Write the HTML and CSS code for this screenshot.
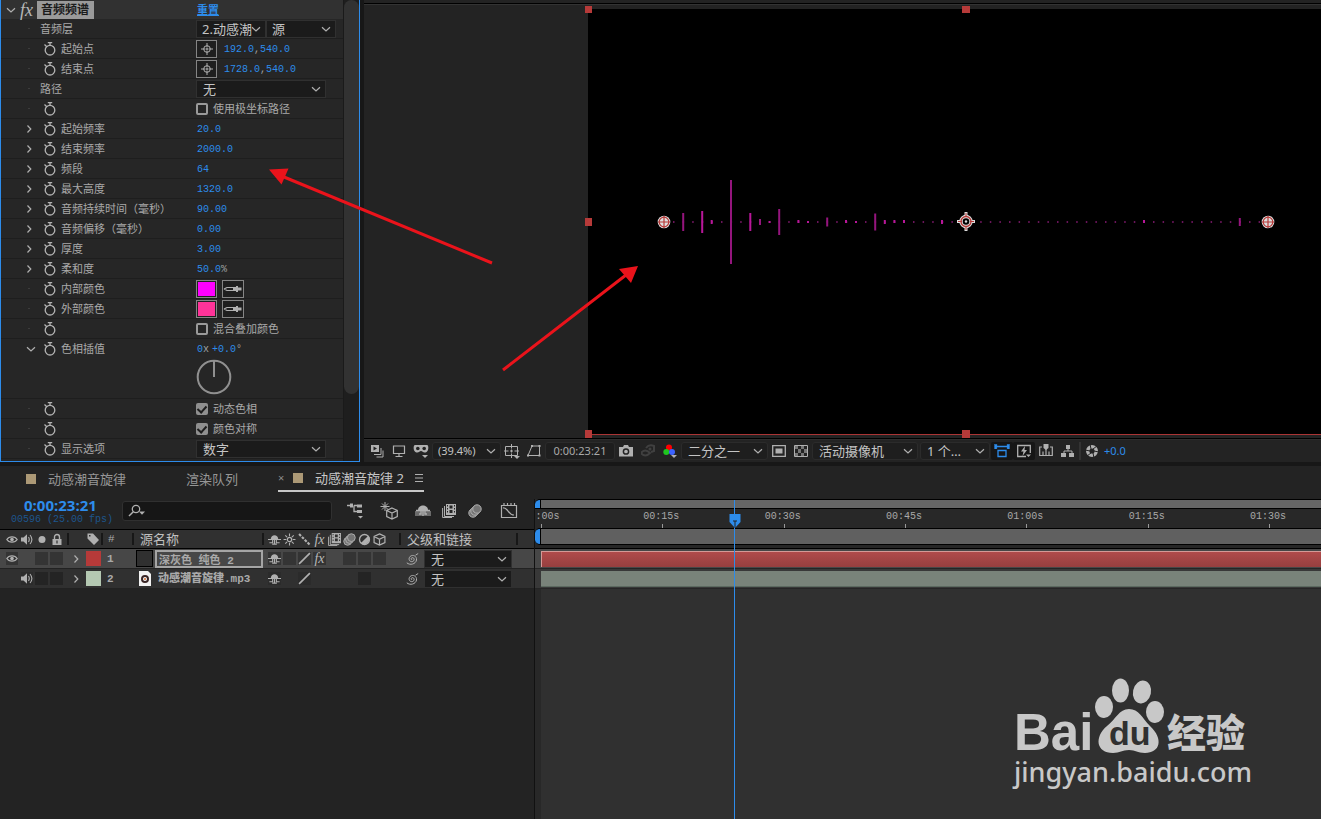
FILE: index.html
```html
<!DOCTYPE html>
<html lang="zh-CN">
<head>
<meta charset="utf-8">
<title>音频频谱</title>
<link rel="stylesheet" href="styles.css">
</head>
<body>
<svg class="defs" aria-hidden="true">
  <symbol id="watch" viewBox="0 0 14 14"><circle cx="7" cy="8.2" r="4.8" fill="none" stroke="currentColor" stroke-width="1.3"/><path d="M4.800 .7h4.400M7 .7v2.500M1.500 2.500l2 2" fill="none" stroke="currentColor" stroke-width="1.300"/></symbol>
  <symbol id="right" viewBox="0 0 10 10"><path d="M3.500 1.500L6.800 5 3.500 8.500" fill="none" stroke="currentColor" stroke-width="1.200"/></symbol>
  <symbol id="down" viewBox="0 0 10 10"><path d="M1 3.200L5 7l4-3.800" fill="none" stroke="currentColor" stroke-width="1.200"/></symbol>
  <symbol id="target" viewBox="0 0 12 12"><circle cx="6" cy="6" r="3.300" fill="none" stroke="currentColor"/><path d="M6 0v4.500M6 7.500V12M0 6h4.500M7.500 6H12" stroke="currentColor"/><circle cx="6" cy="6" r="1" fill="currentColor"/></symbol>
  <symbol id="dropper" viewBox="0 0 20 8"><path d="M1 4L4 2.500H11M1 4L4 5.500H11" fill="none" stroke="currentColor" stroke-width="1.200"/><path d="M10 2h3V1h2v1.500h3.500v3H15V7h-2V6h-3z" fill="currentColor"/></symbol>
  <symbol id="eye" viewBox="0 0 12 12"><path d="M.8 6C3 2.400 9 2.400 11.200 6 9 9.600 3 9.600.8 6z" fill="none" stroke="currentColor" stroke-width="1.200"/><circle cx="6" cy="6" r="1.800" fill="currentColor"/></symbol>
  <symbol id="speaker" viewBox="0 0 12 12"><path d="M0 4h2.500L6 .8v10.400L2.500 8H0z" fill="currentColor"/><path d="M7.500 3.500q1.500 2.500 0 5M9 1.500q3.800 4.500 0 9" fill="none" stroke="currentColor" stroke-width="1.100"/></symbol>
  <symbol id="dot" viewBox="0 0 12 12"><circle cx="6" cy="6" r="3.500" fill="currentColor"/></symbol>
  <symbol id="lock" viewBox="0 0 12 12"><path d="M3.500 6V3.500a2.500 2.500 0 0 1 5 0V6" fill="none" stroke="currentColor" stroke-width="1.400"/><path d="M1.500 5.500h9v6h-9zM5.400 7v3h1.200V7z" fill="currentColor" fill-rule="evenodd"/></symbol>
  <symbol id="tag" viewBox="0 0 14 14"><path d="M1.500 1.500H7L13 8l-5 5L1.500 6.500zM3 3v1.500h1.500V3z" fill="currentColor" fill-rule="evenodd"/></symbol>
  <symbol id="shy" viewBox="0 0 14 12"><path d="M3 5.500C3 0 11 0 11 5.500z" fill="currentColor"/><path d="M0 6h14M7 5v6M1.500 9.500H5V6M12.500 9.500H9V6M4.500 11h5" fill="none" stroke="currentColor" stroke-width="1.200"/></symbol>
  <symbol id="sun" viewBox="0 0 12 12"><circle cx="6" cy="6" r="2" fill="none" stroke="currentColor" stroke-width="1.200"/><path d="M6 .5v2.500M6 9v2.500M.5 6H3M9 6h2.500M2.100 2.100l1.700 1.700M8.200 8.200l1.700 1.700M2.100 9.900l1.700-1.700M8.200 3.800l1.700-1.700" stroke="currentColor"/></symbol>
  <symbol id="quality" viewBox="0 0 12 12"><path d="M1 1l10 10" stroke="currentColor" stroke-width="2" stroke-dasharray="2.500 1.200"/></symbol>
  <symbol id="slash" viewBox="0 0 12 12"><path d="M1 11L11 1" stroke="currentColor" stroke-width="1.500"/></symbol>
  <symbol id="film" viewBox="0 0 14 14"><path d="M4 0h10v11H4zM5 1v1.500h1V1zm0 3v1.500h1V4zm0 3v1.500h1V7zm7-6v1.500h1V1zm0 3v1.500h1V4zm0 3v1.500h1V7zM7.500 1.500v3h3v-3zm0 4.500v3h3V6z" fill="currentColor" fill-rule="evenodd"/><path d="M2.500 2v10.500H12M.6 4v9.500H10" fill="none" stroke="currentColor"/></symbol>
  <symbol id="blur" viewBox="0 0 14 14"><g fill="#747474" stroke="currentColor"><circle cx="5" cy="9" r="4.200"/><circle cx="7" cy="7" r="4.200"/><circle cx="9" cy="5" r="4.200"/></g></symbol>
  <symbol id="adjust" viewBox="0 0 12 12"><circle cx="6" cy="6" r="4.600" fill="none" stroke="currentColor" stroke-width="1.200"/><path d="M9.500 2.500a5 5 0 0 1-7 7z" fill="currentColor"/></symbol>
  <symbol id="cube" viewBox="0 0 12 12"><path d="M6 .8l5 2.400v5.600l-5 2.400-5-2.400V3.200zM1 3.200l5 2.600 5-2.600M6 5.800V11" fill="none" stroke="currentColor" stroke-width="1.100"/></symbol>
  <symbol id="whip" viewBox="0 0 14 14"><path d="M7.200 7.600c-1.200.4-1.600-1.400-.2-1.900 2.300-.6 3.100 2.800.8 3.800-3.200 1-5-2.700-2.600-5.100 2.700-2.300 6.800-.2 6.300 3.600-.8 4.200-6.500 5.600-9.700 2.800M10.500 3.200L13.200 1.500" fill="none" stroke="currentColor"/></symbol>
  <symbol id="monitor" viewBox="0 0 14 14"><path d="M1.500 2h11v7.500h-11zM7 9.500V12M3.500 12.500h7" fill="none" stroke="currentColor" stroke-width="1.200"/></symbol>
</svg>

<div class="app">
  <section class="effects">
    <div class="props">
      <header class="fx-head">
        <svg class="i10"><use href="#down"/></svg><i class="fx">fx</i>
        <strong>音频频谱</strong><a href="#reset">重置</a>
      </header>
      <div class="row"><span class="tiny"></span><label class="wide" for="s1">音频层</label><div class="value"><span class="pick short"><select id="s1"><option>2.动感潮</option></select><svg><use href="#down"/></svg></span><span class="pick short"><select aria-label="源"><option>源</option></select><svg><use href="#down"/></svg></span></div></div>
      <div class="row"><span class="tiny"></span><button class="watch" aria-label="关键帧"><svg><use href="#watch"/></svg></button><span>起始点</span><div class="value"><button class="box" aria-label="选择点"><svg class="i12"><use href="#target"/></svg></button><span class="num point">192.0<em>,</em>540.0</span></div></div>
      <div class="row"><span class="tiny"></span><button class="watch" aria-label="关键帧"><svg><use href="#watch"/></svg></button><span>结束点</span><div class="value"><button class="box" aria-label="选择点"><svg class="i12"><use href="#target"/></svg></button><span class="num point">1728.0<em>,</em>540.0</span></div></div>
      <div class="row"><span class="tiny"></span><label class="wide" for="s2">路径</label><div class="value"><span class="pick long"><select id="s2"><option>无</option></select><svg><use href="#down"/></svg></span></div></div>
      <div class="row"><span class="tiny"></span><button class="watch" aria-label="关键帧"><svg><use href="#watch"/></svg></button><span></span><label class="value"><input type="checkbox">使用极坐标路径</label></div>
      <div class="row"><svg class="i10 ch"><use href="#right"/></svg><button class="watch" aria-label="关键帧"><svg><use href="#watch"/></svg></button><span>起始频率</span><div class="value num">20.0</div></div>
      <div class="row"><svg class="i10 ch"><use href="#right"/></svg><button class="watch" aria-label="关键帧"><svg><use href="#watch"/></svg></button><span>结束频率</span><div class="value num">2000.0</div></div>
      <div class="row"><svg class="i10 ch"><use href="#right"/></svg><button class="watch" aria-label="关键帧"><svg><use href="#watch"/></svg></button><span>频段</span><div class="value num">64</div></div>
      <div class="row"><svg class="i10 ch"><use href="#right"/></svg><button class="watch" aria-label="关键帧"><svg><use href="#watch"/></svg></button><span>最大高度</span><div class="value num">1320.0</div></div>
      <div class="row"><svg class="i10 ch"><use href="#right"/></svg><button class="watch" aria-label="关键帧"><svg><use href="#watch"/></svg></button><span>音频持续时间（毫秒）</span><div class="value num">90.00</div></div>
      <div class="row"><svg class="i10 ch"><use href="#right"/></svg><button class="watch" aria-label="关键帧"><svg><use href="#watch"/></svg></button><span>音频偏移（毫秒）</span><div class="value num">0.00</div></div>
      <div class="row"><svg class="i10 ch"><use href="#right"/></svg><button class="watch" aria-label="关键帧"><svg><use href="#watch"/></svg></button><span>厚度</span><div class="value num">3.00</div></div>
      <div class="row"><svg class="i10 ch"><use href="#right"/></svg><button class="watch" aria-label="关键帧"><svg><use href="#watch"/></svg></button><span>柔和度</span><div class="value num">50.0<em>%</em></div></div>
      <div class="row"><span class="tiny"></span><button class="watch" aria-label="关键帧"><svg><use href="#watch"/></svg></button><span>内部颜色</span><div class="value"><button class="box inner" aria-label="内部颜色"></button><button class="box drop" aria-label="吸管"><svg><use href="#dropper"/></svg></button></div></div>
      <div class="row"><span class="tiny"></span><button class="watch" aria-label="关键帧"><svg><use href="#watch"/></svg></button><span>外部颜色</span><div class="value"><button class="box outer" aria-label="外部颜色"></button><button class="box drop" aria-label="吸管"><svg><use href="#dropper"/></svg></button></div></div>
      <div class="row"><span class="tiny"></span><button class="watch" aria-label="关键帧"><svg><use href="#watch"/></svg></button><span></span><label class="value"><input type="checkbox">混合叠加颜色</label></div>
      <div class="row open"><svg class="i10 ch"><use href="#down"/></svg><button class="watch" aria-label="关键帧"><svg><use href="#watch"/></svg></button><span>色相插值</span><div class="value num">0<em>x</em><span class="deg">+0.0</span><em>°</em></div></div>
      <div class="row dial"><svg viewBox="0 0 36 36"><circle cx="18" cy="18" r="16.300"/><path d="M18 2v16"/></svg></div>
      <div class="row"><span class="tiny"></span><button class="watch" aria-label="关键帧"><svg><use href="#watch"/></svg></button><span></span><label class="value"><input type="checkbox" checked>动态色相</label></div>
      <div class="row"><span class="tiny"></span><button class="watch" aria-label="关键帧"><svg><use href="#watch"/></svg></button><span></span><label class="value"><input type="checkbox" checked>颜色对称</label></div>
      <div class="row"><span class="tiny"></span><button class="watch" aria-label="关键帧"><svg><use href="#watch"/></svg></button><label for="s3">显示选项</label><div class="value"><span class="pick long"><select id="s3"><option>数字</option></select><svg><use href="#down"/></svg></span></div></div>
    </div>
    <div class="track"><div class="thumb"></div></div>
  </section>

  <section class="comp">
    <div class="viewer">
      <div class="canvas">
        <svg class="scene"><g transform="translate(-588 -9)">
          <path d="M673 222H1260" stroke="#8c1c78" stroke-width="1.500" stroke-dasharray="1.500 8.100"/>
          <path d="M711.700 220v4M769.500 221v2M798.400 220v3M808 221v2M846 220v3M856 221v2M884.800 220v4M894.400 220v3M904 220v3M942 220v4M1144 220v3M702.200 211v22M750.300 213v18" stroke="#b81799" stroke-width="2"/>
          <path d="M683.200 213v18M731 180v84M760 219v6M779.200 209v26M827.200 217.500v9M875.200 213.500v17M1239.800 218v8" stroke="#94157d" stroke-width="2"/>
          <path d="M592 434.500H1400" stroke="#a93434"/>
          <g fill="#b63a39"><path d="M585 6h7v7h-7zM962 6h8v7h-8zM585 218h7v8h-7zM585 430h7v8h-7zM962 430h8v8h-8z"/></g>
          <g id="pin"><circle cx="664" cy="222" r="6.300" fill="#ddd"/><circle cx="664" cy="222" r="4.800" fill="none" stroke="#b63a39" stroke-width="1.200"/><path d="M664 216v12M658 222h12" stroke="#b63a39" stroke-width="1.200"/></g>
          <use href="#pin" x="604"/>
          <g fill="none"><circle cx="966" cy="221.500" r="5" stroke="#ddd" stroke-width="3.400"/><path d="M966 212v5M966 226v5M957 221.500h5M970 221.500h5" stroke="#ddd" stroke-width="3"/><circle cx="966" cy="221.500" r="5" stroke="#b63a39" stroke-width="1.300"/><path d="M966 213v4M966 226v4M958 221.500h4M970 221.500h4" stroke="#b63a39"/><circle cx="966" cy="221.500" r="1.200" fill="#ddd"/></g>
        </g></svg>
      </div>
    </div>
    <div class="bar">
      <span class="cell"><svg class="i14"><path d="M1 1h8v7H1z" fill="currentColor"/><path d="M3.500 2.500L7 4.500 3.500 6.500z" fill="#222"/><path d="M11 4v6.500H4M13 6.500V13H6.500" fill="none" stroke="currentColor"/></svg></span>
      <span class="cell"><svg class="i14"><use href="#monitor"/></svg></span>
      <span class="cell"><svg class="i16"><path d="M2 2h12c2 0 2 7-1.500 7.500C10 10 9.500 8 8 8s-2 2-4.500 1.500C0 9 0 2 2 2z" fill="currentColor"/><g fill="#232323"><circle cx="4.800" cy="5.500" r="1.800"/><circle cx="11.200" cy="5.500" r="1.800"/></g><path d="M9 12h6l-3 3z" fill="currentColor"/></svg></span>
      <span class="pick zoom"><select aria-label="缩放"><option>(39.4%)</option></select><svg><use href="#down"/></svg></span>
      <span class="cell"><svg class="i16"><path d="M1.500 3.500h12v9h-12zM7.500 1v4.500M7.500 10.500V15M0 8h4.500M10.500 8H15M6 8h3M7.500 6.500v3" fill="none" stroke="currentColor"/><path d="M10 13h6l-3 3z" fill="currentColor"/></svg></span>
      <span class="cell"><svg class="i14"><path d="M5 2h7.500v9.500H1L5 2z" fill="none" stroke="currentColor"/><path d="M4 1h2v2H4zM11.500 1h2v2h-2zM11.500 10.500h2v2h-2zM0 10.500h2v2H0z" fill="currentColor"/></svg></span>
      <span class="timecode">0:00:23:21</span>
      <span class="cell"><svg class="i14"><path d="M0 3h4l1-2h4l1 2h4v9.500H0z" fill="currentColor"/><circle cx="7" cy="7.500" r="2.600" fill="currentColor" stroke="#222" stroke-width="1.500"/></svg></span>
      <span class="cell dim"><svg class="i14"><path d="M0 9q4-5 9 0-5 5-9 0z" fill="none" stroke="currentColor" stroke-width="2"/><path d="M5 4q3-4 8-2v5l-3 1" fill="none" stroke="currentColor" stroke-width="2"/><circle cx="9" cy="5" r="1.500" fill="currentColor"/></svg></span>
      <span class="cell"><svg class="i16"><circle cx="7" cy="4.500" r="3" fill="#f00"/><circle cx="4.300" cy="9" r="3" fill="#1fc51f"/><circle cx="10" cy="9" r="3" fill="#3c62ff"/><path d="M9 12h6l-3 3z" fill="currentColor"/></svg></span>
      <span class="pick res"><select aria-label="分辨率"><option>二分之一</option></select><svg><use href="#down"/></svg></span>
      <span class="cell"><svg class="i14"><path d="M.7 1.700h12.600v10.600H.7z" fill="none" stroke="currentColor" stroke-width="1.300"/><path d="M3.500 4.500h7v5h-7z" fill="currentColor"/></svg></span>
      <span class="cell"><svg class="i14"><path d="M.5 1.500h13v11H.5z" fill="none" stroke="currentColor"/><path d="M1 2h3v3H1zM7 2h3v3H7zM4 5h3v4H4zM10 5h3v4h-3zM1 9h3v3H1zM7 9h3v3H7z" fill="#777"/></svg></span>
      <span class="pick cam"><select aria-label="视图"><option>活动摄像机</option></select><svg><use href="#down"/></svg></span>
      <span class="pick views"><select aria-label="视图数"><option>1 个…</option></select><svg><use href="#down"/></svg></span>
      <span class="cell on blue"><svg class="i16"><path d="M1 1v5M15 1v5M1 3.500h14M4 7.500h8v6H4zM3 1.500L1 3.500l2 2M13 1.500l2 2-2 2" fill="none" stroke="currentColor" stroke-width="1.300"/></svg></span>
      <span class="cell on"><svg class="i14"><path d="M9 12.500H.7V1.500h12.600V9" fill="none" stroke="currentColor" stroke-width="1.300"/><path d="M8 2L4 7.500h2.500L5.500 12l4.500-6H7.500zM9 10.500h5L11.500 13z" fill="currentColor"/></svg></span>
      <span class="cell"><svg class="i14"><path d="M3 3H.7v8.500h12.600V3H11M4 11V7.500M7 11V5M10 11V7.500" fill="none" stroke="currentColor" stroke-width="1.200"/><path d="M4.500 0h5v4L7 6 4.500 4z" fill="currentColor"/></svg></span>
      <span class="cell"><svg class="i14"><path d="M5 1h4v4H5zM0 9h5v4H0zM8 9h5v4H8z" fill="currentColor"/><path d="M7 4v3M3 10V7h8v3" fill="none" stroke="currentColor"/></svg></span>
      <span class="rule"></span>
      <span class="cell"><svg class="i14"><circle cx="7" cy="7" r="4.300" fill="none" stroke="currentColor" stroke-width="3.400"/><path d="M5 0l1 5M12 2L8 5M14 8l-5-1M9 14L8 9M2 12l4-3M0 6l5 1" stroke="#232323"/></svg></span>
      <span class="exposure">+0.0</span>
    </div>
  </section>

  <section class="timeline">
    <nav class="tabs">
      <button class="tab first"><i class="chip"></i>动感潮音旋律</button>
      <button class="tab">渲染队列</button>
      <button class="tab active"><small>×</small><i class="chip"></i>动感潮音旋律 2<svg class="i10"><path d="M1 1.500h8M1 5h8M1 8.500h8" stroke="currentColor"/></svg></button>
    </nav>
    <div class="layers">
      <div class="tools">
        <div class="time"><b>0:00:23:21</b><span>00596 (25.00 fps)</span></div>
        <label class="search"><svg viewBox="0 0 20 14"><circle cx="8" cy="5" r="3.700" fill="none" stroke="currentColor" stroke-width="1.300"/><path d="M5.300 7.700L1 12" stroke="currentColor" stroke-width="1.500"/><path d="M11 7.500h6l-3 3.200z" fill="currentColor"/></svg><input type="text" aria-label="搜索"></label>
        <div class="modes">
          <svg class="i18"><path d="M1 3.500h6M8 3.500h3M8 3.500v6h3" fill="none" stroke="currentColor" stroke-width="1.300"/><path d="M4 1.500h3v4H4zM11 2.500h5v3h-5zM11 8h5v3h-5zM12 14h5l-2.500 2.500z" fill="currentColor"/></svg>
          <svg class="i18" viewBox="0 0 18 18"><path d="M12 6l5.300 2.500v6L12 17l-5.300-2.500v-6zM6.700 8.500L12 11l5.300-2.500M12 11v6" fill="none" stroke="currentColor" stroke-width="1.200"/><path d="M5 0v9M.5 4.500h9M2 1.500l6 6M8 1.500l-6 6" stroke="currentColor"/></svg>
          <svg class="i18" viewBox="0 0 18 18"><path d="M1 9h16v5H1z" fill="#6b6b6b"/><path d="M4 8c0-6 10-6 10 0z" fill="currentColor"/><path d="M2 8.500h14M9 7v7M5 12h2V9M13 12h-2V9" fill="none" stroke="currentColor" stroke-width="1.300"/></svg>
          <svg class="i14"><use href="#film"/></svg>
          <svg class="i14"><use href="#blur"/></svg>
          <svg class="i18" viewBox="0 0 18 18"><path d="M1.500 3.500h15v12h-15zM4 1v3M7.500 1v3M11 1v3M14.500 1v3M3 6c5-1 5 7 11 7" fill="none" stroke="currentColor" stroke-width="1.200"/></svg>
        </div>
      </div>
      <div class="line head">
        <div class="quad"><svg><use href="#eye"/></svg><svg><use href="#speaker"/></svg><svg><use href="#dot"/></svg><svg><use href="#lock"/></svg></div>
        <span class="edge"></span><svg class="i14"><use href="#tag"/></svg><span class="no hash">#</span><span class="title edge">源名称</span>
        <div class="octo"><svg><use href="#shy"/></svg><svg><use href="#sun"/></svg><svg><use href="#quality"/></svg><i class="fx">fx</i><svg><use href="#film"/></svg><svg><use href="#blur"/></svg><svg><use href="#adjust"/></svg><svg><use href="#cube"/></svg></div>
        <span class="edge late"></span><span class="parent title edge">父级和链接</span>
      </div>
      <div class="line chosen">
        <div class="quad"><svg class="well"><use href="#eye"/></svg><span></span><i class="well"></i><i class="well"></i></div>
        <svg class="i10 mid"><use href="#right"/></svg><i class="label red"></i><b class="no">1</b>
        <div class="name"><i class="solid"></i><input type="text" value="深灰色 纯色 2" aria-label="图层名称"></div>
        <div class="octo"><svg class="well"><use href="#shy"/></svg><i class="well"></i><svg class="well"><use href="#slash"/></svg><i class="fx well">fx</i><span></span><i class="well"></i><i class="well"></i><i class="well"></i></div>
        <span></span><div class="parent"><svg class="i14"><use href="#whip"/></svg><span class="pick"><select aria-label="父级"><option>无</option></select><svg><use href="#down"/></svg></span></div>
      </div>
      <div class="line">
        <div class="quad"><span></span><svg class="well"><use href="#speaker"/></svg><i class="well"></i><i class="well"></i></div>
        <svg class="i10 mid"><use href="#right"/></svg><i class="label green"></i><b class="no">2</b>
        <div class="name"><svg class="file" viewBox="0 0 12 15"><path d="M0 0h9l3 3v12H0z" fill="#f2f2f2"/><circle cx="6" cy="8" r="3" fill="#fff" stroke="#3a2626" stroke-width="2"/><circle cx="6" cy="8" r="1" fill="#d06a2c"/></svg><b>动感潮音旋律.mp3</b></div>
        <div class="octo"><svg class="well"><use href="#shy"/></svg><span></span><svg class="well"><use href="#slash"/></svg><span></span><span></span><span></span><i class="well"></i><span></span></div>
        <span></span><div class="parent"><svg class="i14"><use href="#whip"/></svg><span class="pick"><select aria-label="父级"><option>无</option></select><svg><use href="#down"/></svg></span></div>
      </div>
    </div>
    <div class="graph">
      <div class="navigator"></div>
      <div class="ruler"><span class="start">:00s</span><span>00:15s</span><span>00:30s</span><span>00:45s</span><span>01:00s</span><span>01:15s</span><span>01:30s</span></div>
      <div class="work"></div>
      <div class="cache"></div>
      <div class="lane chosen"><div class="clip red"></div></div>
      <div class="lane"><div class="clip green"></div></div>
      <div class="empty"></div>
      <svg class="playhead" viewBox="0 0 12 14"><path d="M.5 0h11v8L6 14 .5 8z" fill="#2d8ceb"/><path d="M4 7h4M6 7v7" stroke="#222"/></svg>
    </div>
  </section>

  <svg class="arrows" aria-hidden="true">
    <path d="M492 263L284 177M503 370L626 275" stroke="#ea131b" stroke-width="3"/>
    <path d="M269 169.500l19.500-1-7 16zM638 266l-7 17-12-14z" fill="#ea131b"/>
  </svg>
  <svg class="mark" viewBox="0 0 250 120">
    <g fill="#c8c8c8">
      <text class="bai" x="2" y="80">Bai</text>
      <ellipse cx="92" cy="37" rx="9" ry="11"/><ellipse cx="108.500" cy="20.500" rx="8.500" ry="12"/><ellipse cx="130" cy="22" rx="9" ry="11.500" transform="rotate(12 130 22)"/><ellipse cx="143" cy="42" rx="9" ry="11"/>
      <path d="M117 39c10 0 13 9 21 17 14 13 10 27-5 27-8 0-9-3-16-3s-9 3-16 3c-17 0-19-16-6-27 9-7 12-17 22-17z"/>
      <text class="jy" x="155" y="77">经验</text>
      <text class="site" x="2" y="112">jingyan.baidu.com</text>
    </g>
    <text class="du" x="97" y="75">du</text>
  </svg>
</div>
</body>
</html>
```

FILE: styles.css
```css
* { box-sizing: border-box; }
body { margin: 0; background: #171717; color: #a9a9a9; font: 11px/18px "Noto Sans", "Noto Sans CJK SC", sans-serif; }
.defs { position: absolute; width: 0; height: 0; }
svg { display: block; flex: none; color: #b0b0b0; }
button, input, select { font: inherit; color: inherit; margin: 0; }
button { background: none; border: 0; padding: 0; }
em { font-style: normal; color: #a0a0a0; }
.i10 { width: 10px; height: 10px; }
.i12 { width: 12px; height: 12px; }
.i14 { width: 14px; height: 14px; }
.i16 { width: 16px; height: 16px; }
.i18 { width: 18px; height: 18px; }
.fx { font: italic 16px/16px "Liberation Serif", serif; color: #b8b8b8; }

.app { position: relative; display: grid; grid-template-columns: 360px minmax(0, 1fr); grid-template-rows: auto 1fr; gap: 4px; min-height: 100vh; overflow: hidden; }

/* effect controls */
.effects { display: flex; border: 1px solid #2d8ceb; border-top: 0; background: #232323; }
.props { flex: 1; background: #262626; padding-bottom: 2px; }
.fx-head { display: flex; align-items: center; height: 19px; background: #313131; padding-left: 5px; }
.fx-head .fx { width: 21px; text-align: center; font-size: 18px; }
.fx-head strong { width: 57px; background: #9a9a9a; color: #1b1b1b; font-size: 12px; padding-left: 4px; }
.fx-head a { color: #2d8ceb; font-weight: 700; margin-left: 103px; }
.row { display: grid; grid-template-columns: 37px 23px 135px 1fr; align-items: center; height: 20px; border-bottom: 1px solid #1e1e1e; }
.row.open { border-color: transparent; }
.row .wide { grid-column: 2 / 4; padding-left: 2px; }
.tiny { width: 2px; height: 1px; background: #3c3c3c; margin-left: 27px; }
.ch { margin-left: 23px; }
.open .ch { margin-left: 25px; }
.watch { width: 23px; display: grid; place-items: center; }
.watch svg { width: 14px; height: 14px; color: #b4b4b4; }
.value { display: flex; align-items: center; }
.num { color: #2d8ceb; font: 10px/17px "Liberation Mono", monospace; padding: 2px 0 0 1px; }
.deg { margin-left: 3px; }
.point { margin-left: 6px; }
.box { width: 21px; height: 18px; border: 1px solid #858585; background: #1f1f1f; display: grid; place-items: center; }
.box.inner { background: #f0f; box-shadow: inset 0 0 0 1px #222; }
.box.outer { background: #ff3399; box-shadow: inset 0 0 0 1px #222; }
.drop { width: 22px; margin-left: 5px; }
.drop svg { width: 20px; height: 8px; }
.value input { appearance: none; width: 12px; height: 12px; border: 2px solid #9a9a9a; border-radius: 2px; margin-right: 5px; }
.value input:checked { border: 0; background: #8f8f8f; display: grid; place-items: center; }
.value input:checked::after { content: ""; width: 4px; height: 7px; border: solid #1e1e1e; border-width: 0 2px 2px 0; transform: rotate(42deg); }
.dial { display: block; height: 40px; padding-left: 195px; }
.dial svg { width: 36px; height: 36px; fill: none; stroke: #909090; stroke-width: 2px; }
.track { width: 16px; border-left: 1px solid #1a1a1a; background: #1e1e1e; }
.thumb { height: 394px; background: #323232; border-radius: 8px; }

.pick { position: relative; display: inline-flex; height: 18px; background: #1b1b1b; border: 1px solid #303030; font-size: 13px; color: #c4c4c4; }
.pick select { appearance: none; width: 100%; border: 0; background: none; padding: 0 13px 0 6px; line-height: 16px; }
.pick svg { position: absolute; right: 4px; top: 3px; width: 10px; height: 10px; pointer-events: none; }
.short { width: 70px; }
.short select { padding-left: 5px; }
.long { width: 130px; }

/* composition viewer */
.comp { display: flex; flex-direction: column; background: #232323; }
.viewer { flex: 1; display: flex; margin-top: 3px; padding: 4px 0 4px 224px; border-top: 1px solid #000; border-bottom: 1px solid #000; box-shadow: inset 0 1px #333; }
.canvas { flex: 1; background: #000; margin-top: 1px; }
.scene { width: 100%; height: 425px; overflow: visible; }
.bar { display: flex; align-items: center; height: 23px; padding-left: 2px; border-top: 1px solid #2c2c2c; }
.cell { width: 22px; height: 18px; flex: none; display: grid; place-items: center; }
.cell.on { background: #161616; border-radius: 2px; }
.dim svg { color: #404040; }
.blue svg { color: #2d8ceb; }
.bar .pick, .timecode { border-radius: 3px; background: #1e1e1e; border-color: #2b2b2b; }
.bar .zoom { width: 69px; font-size: 11px; }
.bar .zoom select { padding-left: 5px; }
.timecode { width: 70px; text-align: center; border: 1px solid #2b2b2b; line-height: 16px; }
.bar .res { width: 87px; }
.bar .cam { width: 106px; margin-right: 2px; }
.bar .views { width: 70px; margin-right: 1px; }
.rule { width: 2px; height: 18px; background: #333; }
.exposure { color: #2d8ceb; padding-left: 1px; }

/* timeline */
.timeline { grid-column: 1 / 3; display: grid; grid-template-columns: 534px minmax(0, 1fr); grid-template-rows: 33px 1fr; background: #232323; }
.tabs { grid-column: 1 / 3; display: flex; align-items: flex-start; padding-left: 26px; font-size: 13px; color: #969696; }
.tab { display: flex; align-items: center; height: 26px; margin-right: 40px; }
.tab.first { margin-right: 60px; }
.chip { width: 10px; height: 10px; background: #ac9976; margin-right: 12px; }
.active { color: #c8c8c8; border-bottom: 2px solid #c8c8c8; }
.active small { width: 15px; text-align: left; color: #8c8c8c; font-size: 11px; }
.active svg { margin-left: 10px; }
.tools { display: grid; grid-template-columns: 122px 210px 1fr; height: 30px; }
.time { display: flex; flex-direction: column; padding-left: 11px; }
.time b { color: #2d8ceb; font: 700 15px/12px "Open Sans", sans-serif; padding-left: 13px; }
.time span { color: #1d558c; font: 10px/18px "Liberation Mono", monospace; }
.search { display: flex; align-items: center; height: 20px; margin-top: 2px; background: #161616; border: 1px solid #303030; border-radius: 3px; padding-left: 5px; }
.search svg { width: 20px; height: 14px; }
.search input { flex: 1; min-width: 0; background: none; border: 0; }
.modes { display: flex; align-items: center; height: 24px; padding-left: 14px; }
.modes svg:nth-child(2) { margin-left: 16px; }
.modes svg:nth-child(3) { margin-left: 16px; }
.modes svg:nth-child(4) { margin-left: 10px; }
.modes svg:nth-child(5) { margin-left: 12px; }
.modes svg:nth-child(6) { margin-left: 18px; }
.line { display: grid; grid-template-columns: 60px 22px 15px 35px 131px 120px 17px 1fr; align-items: center; height: 20px; padding-left: 4px; background: #303030; border-bottom: 1px solid #222; }
.line.head { border-top: 1px solid #000; border-bottom-color: #000; }
.line.chosen, .lane.chosen { background: #474747; }
.quad, .octo { display: grid; grid-template-columns: repeat(4, 15px); place-items: center; }
.octo { grid-template-columns: repeat(8, 15px); }
.quad svg, .octo svg { width: 13px; height: 13px; }
.quad svg { width: 12px; }
.octo .fx { font-size: 14px; line-height: 13px; text-align: center; }
.well { width: 13px; height: 13px; background: #2b2b2b; }
i.well, .chosen .well { background: #343434; }
.line:not(.chosen) i.well { background: #242424; }
.mid { justify-self: center; margin-left: 2px; }
.edge { border-right: 2px solid #171717; height: 12px; width: 5px; line-height: 12px; }
.edge.late { margin-left: 9px; }
.title { font-size: 13px; color: #c0c0c0; }
.title.edge { width: 128px; padding-left: 4px; }
.parent.title.edge { width: 114px; padding-left: 3px; }
.label { width: 15px; height: 15px; }
.label.red { background: #b63a39; }
.label.green { background: #b4c8b2; }
.no { font: 700 11px/18px "Liberation Mono", monospace; padding-left: 6px; }
.hash { width: 33px; height: 12px; padding-left: 5px; font-weight: 400; line-height: 12px; border: solid #171717; border-width: 0 2px; }
.name { display: flex; align-items: center; font: 700 11px/16px "Liberation Mono", "Noto Sans CJK SC", monospace; }
.solid { width: 17px; height: 17px; background: #303030; border: 1px solid #000; }
.name input { width: 108px; height: 18px; margin-left: 2px; padding: 0 0 0 2px; font: inherit; background: #474747; border: 2px solid #a5a5a5; }
.file { width: 12px; height: 15px; margin: 0 7px 0 3px; }
.parent { display: flex; align-items: center; padding-left: 1px; }
.parent .pick { width: 88px; margin-left: 5px; }

.graph { position: relative; display: flex; flex-direction: column; border-left: 1px solid #111; background: #282828; }
.navigator { height: 10px; border: solid #000; border-width: 1px 0; background: linear-gradient(90deg, #2d8ceb 5px, #000 5px 6px, #666 6px); border-top-left-radius: 5px; }
.ruler { display: grid; grid-template-columns: repeat(7, 121px); justify-content: space-between; height: 19px; margin: 0 -9px 0 -54px; }
.ruler span { text-align: center; font: 10px/16px "Liberation Mono", monospace; background: linear-gradient(#999, #999) 50% 100% / 1px 4px no-repeat; padding-right: 3px; }
.ruler .start { padding: 0 0 0 12px; }
.work { height: 17px; border: solid #000; border-width: 1px 0; background: linear-gradient(90deg, #2d8ceb 5px, #000 5px 6px, #606060 6px); border-radius: 5px 0 0 5px; }
.cache { height: 4px; background: #262626; border-bottom: 1px solid #000; }
.lane { height: 20px; padding: 2px 0 1px 6px; background: #383838; border-bottom: 1px solid #252525; }
.clip { height: 16px; }
.clip.red { background: linear-gradient(#b04b4b, #963f3f); border: solid #d49a97; border-width: 1px 0 0 1px; }
.clip.green { background: #79837a; border-bottom: 1px solid #5c6a60; }
.empty { flex: 1; margin-left: 6px; background: #303030; }
.graph::after { content: ""; position: absolute; left: 199px; top: 1px; bottom: 0; width: 1px; background: #2d8ceb; }
.playhead { position: absolute; z-index: 1; left: 194px; top: 15px; width: 12px; height: 14px; }

.arrows { position: absolute; left: 0; top: 0; width: 100%; height: 100%; pointer-events: none; }
.mark { position: absolute; right: 59px; bottom: 29px; width: 250px; height: 120px; }
.bai { font: 700 51px "Liberation Sans", sans-serif; }
.jy { font: 900 39px "Noto Sans CJK SC", sans-serif; }
.site { font: 500 27px "Noto Sans", sans-serif; }
.du { font: 700 34px "Liberation Sans", sans-serif; fill: #303030; }
```
